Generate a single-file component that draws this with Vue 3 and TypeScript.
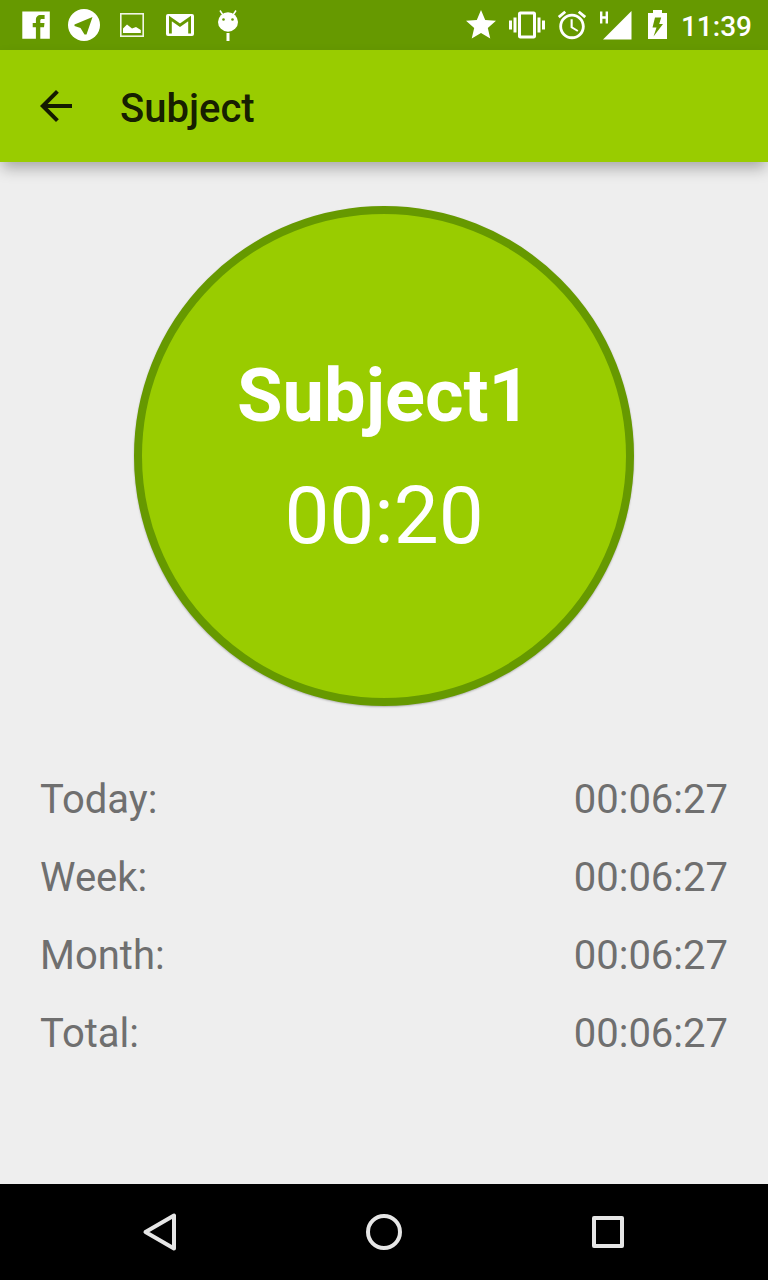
<script setup lang="ts">
interface Stat {
  label: string
  value: string
}

const subject = { name: 'Subject1', elapsed: '00:20' }

const stats: Stat[] = [
  { label: 'Today:', value: '00:06:27' },
  { label: 'Week:', value: '00:06:27' },
  { label: 'Month:', value: '00:06:27' },
  { label: 'Total:', value: '00:06:27' },
]
</script>

<template>
  <div class="screen">
    <div class="status-bar">
      <div class="notifications">
        <svg width="36" height="36" viewBox="0 0 36 36" aria-hidden="true">
          <path fill="#fff" d="M4.300 4.500H31.800V31.800H22.300V20.300H26L26.500 16H22.300V13.500C22.300 12.500 22.800 12 24 12H26.600V8H23C19.500 8 17.900 10 17.900 13V16H14.700V20.300H17.900V31.800H4.300Z" />
        </svg>
        <svg width="36" height="36" viewBox="0 0 36 36" aria-hidden="true">
          <circle cx="18" cy="18" r="16" fill="#fff" />
          <path fill="#690" d="M26.500 10 8.500 17.500V19L14.500 21 18.500 27.500H20.500Z" />
        </svg>
        <svg width="36" height="36" viewBox="0 0 36 36" aria-hidden="true">
          <rect x="6.800" y="6.800" width="22.400" height="22.400" fill="none" stroke="#f0f5e5" stroke-width="1.600" />
          <path fill="#fff" d="M9 26V21.500L13 17.500 18 21.500 22 20 26.800 23V26Z" />
        </svg>
        <svg width="36" height="36" viewBox="0 0 36 36" aria-hidden="true">
          <rect x="4" y="7" width="28" height="22" rx="2" fill="#fff" />
          <path fill="none" stroke="#690" stroke-width="2.800" d="M8.400 26.500V11.500L18 18.200 27.600 11.500V26.500" />
        </svg>
        <svg width="36" height="36" viewBox="0 0 36 36" aria-hidden="true">
          <path fill="none" stroke="#fff" stroke-width="1.500" d="M10 3.500 13 8M26 3.500 23 8" />
          <ellipse cx="18" cy="15" rx="10" ry="9.700" fill="#fff" />
          <circle cx="13.500" cy="12.500" r="1.300" fill="#690" />
          <circle cx="22.500" cy="12.500" r="1.300" fill="#690" />
          <rect x="16.500" y="26" width="3" height="8" fill="#fff" />
        </svg>
      </div>
      <div class="system">
        <svg width="36" height="36" viewBox="0 0 24 24" aria-hidden="true">
          <path fill="#fff" d="M12 17.270 18.180 21l-1.640-7.030L22 9.240l-7.190-.61L12 2 9.190 8.630 2 9.240l5.460 4.730L5.820 21z" />
        </svg>
        <svg width="36" height="36" viewBox="0 0 24 24" aria-hidden="true">
          <path fill="#fff" d="M0 15h2V9H0v6zm3 2h2V7H3v10zm19-8v6h2V9h-2zm-3 8h2V7h-2v10zM16.500 3h-9C6.670 3 6 3.670 6 4.500v15c0 .83.67 1.500 1.500 1.500h9c.83 0 1.500-.67 1.500-1.500v-15c0-.83-.67-1.500-1.500-1.500zM16 19H8V5h8v14z" />
        </svg>
        <svg width="34" height="34" viewBox="0 0 24 24" aria-hidden="true">
          <path fill="#fff" d="M22 5.720l-4.600-3.860-1.290 1.530 4.600 3.860L22 5.720zM7.880 3.390L6.600 1.860 2 5.710l1.290 1.530 4.590-3.850zM12.500 8H11v6l4.750 2.850.75-1.230-4-2.370V8zM12 4c-4.970 0-9 4.030-9 9s4.020 9 9 9c4.970 0 9-4.030 9-9s-4.030-9-9-9zm0 16c-3.870 0-7-3.130-7-7s3.130-7 7-7 7 3.130 7 7-3.130 7-7 7z" />
        </svg>
        <svg width="34" height="36" viewBox="0 0 34 36" aria-hidden="true">
          <path fill="none" stroke="#fff" stroke-width="2.400" d="M2.200 4.500V16.500M7.800 4.500V16.500M2.200 10.500H7.800" />
          <path fill="#fff" d="M32.500 4V32.500H4Z" />
        </svg>
        <svg width="28" height="36" viewBox="0 0 28 36" aria-hidden="true">
          <path fill="#fff" d="M10 3H19V6H24V32H5V6H10Z" />
          <path fill="#690" d="M12 10.500H18.200L16.200 17H20L10.500 29.500 13.500 20.500H9.500Z" />
        </svg>
        <time class="clock">11:39</time>
      </div>
    </div>

    <header class="app-bar">
      <button class="back" type="button" aria-label="Back">
        <svg width="48" height="48" viewBox="0 0 24 24" aria-hidden="true">
          <path fill="currentColor" d="M20 11H7.830l5.590-5.590L12 4l-8 8 8 8 1.410-1.410L7.830 13H20v-2z" />
        </svg>
      </button>
      <h1 class="title">Subject</h1>
    </header>

    <main class="content">
      <button class="timer" type="button">
        <span class="timer-name">{{ subject.name }}</span>
        <span class="timer-value">{{ subject.elapsed }}</span>
      </button>
      <table class="stats">
        <tbody>
          <tr v-for="stat in stats" :key="stat.label">
            <th scope="row">{{ stat.label }}</th>
            <td>{{ stat.value }}</td>
          </tr>
        </tbody>
      </table>
    </main>

    <nav class="nav-bar">
      <button type="button" aria-label="Back">
        <svg width="48" height="48" viewBox="0 0 48 48" aria-hidden="true">
          <path d="M38 7.500V40.500L9.500 24Z" />
        </svg>
      </button>
      <button type="button" aria-label="Home">
        <svg width="48" height="48" viewBox="0 0 48 48" aria-hidden="true">
          <circle cx="24" cy="24" r="16" />
        </svg>
      </button>
      <button type="button" aria-label="Recent apps">
        <svg width="48" height="48" viewBox="0 0 48 48" aria-hidden="true">
          <rect x="10" y="10" width="28" height="28" />
        </svg>
      </button>
    </nav>
  </div>
</template>

<style>
body {
  margin: 0;
  background: #eee;
}
</style>

<style scoped>
.screen {
  display: flex;
  flex-direction: column;
  min-height: 100vh;
  background: #eee;
  font-family: Roboto, "Noto Sans", sans-serif;
}

button {
  padding: 0;
  border: 0;
  background: none;
  font: inherit;
  color: inherit;
  cursor: pointer;
}

svg {
  display: block;
  flex: none;
}

.status-bar {
  display: flex;
  align-items: center;
  justify-content: space-between;
  height: 50px;
  padding: 0 16px 0 18px;
  background: #690;
}

.notifications {
  display: flex;
  align-items: center;
  gap: 12px;
}

.system {
  display: flex;
  align-items: center;
  gap: 10px;
}

.clock {
  padding-top: 4px;
  color: #fff;
  font-size: 28px;
  font-weight: 500;
  line-height: 32px;
}

.app-bar {
  position: relative;
  display: flex;
  align-items: center;
  gap: 40px;
  height: 112px;
  padding: 0 32px;
  background: #9c0;
  color: rgba(0, 0, 0, 0.87);
  box-shadow: 0 8px 14px -2px rgba(0, 0, 0, 0.3);
}

.title {
  margin: 0;
  padding-top: 6px;
  font-size: 40px;
  font-weight: 500;
  line-height: 48px;
}

.content {
  display: flex;
  flex: 1;
  flex-direction: column;
  align-items: center;
  gap: 55px;
  padding: 44px 40px;
}

.timer {
  display: flex;
  flex-direction: column;
  align-items: center;
  justify-content: center;
  box-sizing: border-box;
  width: 500px;
  max-width: 100%;
  aspect-ratio: 1;
  border: 8px solid #690;
  border-radius: 50%;
  background: #9c0;
  box-shadow: 0 1px 2px rgba(0, 0, 0, 0.25);
  color: #fff;
  line-height: 120px;
}

.timer-name {
  font-size: 74px;
  font-weight: 700;
}

.timer-value {
  font-size: 80px;
}

.stats {
  width: 100%;
  border-collapse: collapse;
  color: #6f6f6f;
  font-size: 40px;
  line-height: 78px;
}

.stats th,
.stats td {
  padding: 0;
  font-weight: 400;
  text-align: left;
}

.stats td {
  text-align: right;
}

.nav-bar {
  display: flex;
  height: 96px;
  padding: 0 48px;
  background: #000;
}

.nav-bar button {
  display: flex;
  flex: 1;
  align-items: center;
  justify-content: center;
}

.nav-bar svg {
  fill: none;
  stroke: #e6e6e6;
  stroke-width: 4;
  stroke-linejoin: round;
}
</style>
